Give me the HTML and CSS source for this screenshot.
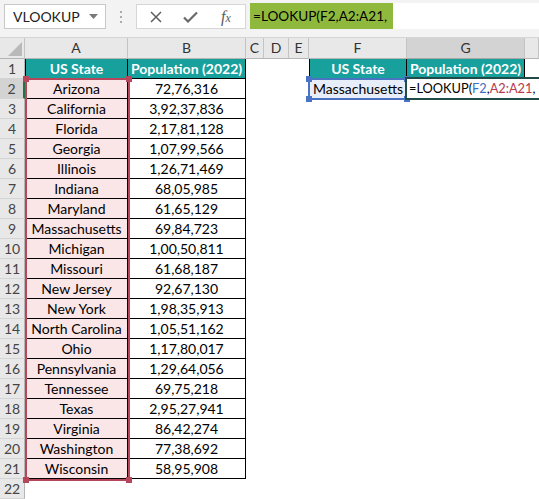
FILE: index.html
```html
<!DOCTYPE html>
<html>
<head>
<meta charset="utf-8">
<link rel="stylesheet" href="styles.css">
</head>
<body>
<div class="toolbar">
  <div class="namebox"><span>VLOOKUP</span><svg class="dd" width="9" height="5" viewBox="0 0 9 5"><path d="M0 0H9L4.5 5Z" fill="#7a7a7a"/></svg></div>
  <div class="dots"><svg width="4" height="14" viewBox="0 0 4 14"><circle cx="2" cy="2" r="1.1" fill="#9a9a9a"/><circle cx="2" cy="7" r="1.1" fill="#9a9a9a"/><circle cx="2" cy="12" r="1.1" fill="#9a9a9a"/></svg></div>
  <div class="fbtns">
    <svg class="ix" width="12" height="12" viewBox="0 0 12 12"><path d="M1 1L11 11M11 1L1 11" stroke="#5e5e5e" stroke-width="1.5"/></svg>
    <svg class="ic" width="15" height="12" viewBox="0 0 15 12"><path d="M1 6.5L5 10.5L14 1.5" stroke="#6a6a6a" stroke-width="2.2" fill="none"/></svg>
    <span class="fx">f<span class="fxx">x</span></span>
  </div>
  <div class="fbar"><span class="ftext">=LOOKUP(F2,A2:A21,</span></div>
</div>
<div class="sheet">
  <div class="row colhdr"><div class="corner"><svg width="14" height="14" viewBox="0 0 14 14"><path d="M14 0V14H0Z" fill="#b9b9b9"/></svg></div><div>A</div><div>B</div><div>C</div><div>D</div><div>E</div><div>F</div><div class="selc">G</div><div></div></div>
  <div class="row"><div class="rh">1</div><div class="c h la">US State</div><div class="c h">Population (2022)</div><div></div><div></div><div></div><div class="c h la">US State</div><div class="c h">Population (2022)</div></div>
  <div class="row"><div class="rh act">2</div><div class="c p la">Arizona</div><div class="c">72,76,316</div><div></div><div></div><div></div><div class="c fcell la">Massachusetts</div><div class="edit">=LOOKUP(<span class="rb">F2</span>,<span class="rr">A2:A21</span>,</div></div>
  <div class="row"><div class="rh">3</div><div class="c p la">California</div><div class="c">3,92,37,836</div></div>
  <div class="row"><div class="rh">4</div><div class="c p la">Florida</div><div class="c">2,17,81,128</div></div>
  <div class="row"><div class="rh">5</div><div class="c p la">Georgia</div><div class="c">1,07,99,566</div></div>
  <div class="row"><div class="rh">6</div><div class="c p la">Illinois</div><div class="c">1,26,71,469</div></div>
  <div class="row"><div class="rh">7</div><div class="c p la">Indiana</div><div class="c">68,05,985</div></div>
  <div class="row"><div class="rh">8</div><div class="c p la">Maryland</div><div class="c">61,65,129</div></div>
  <div class="row"><div class="rh">9</div><div class="c p la">Massachusetts</div><div class="c">69,84,723</div></div>
  <div class="row"><div class="rh">10</div><div class="c p la">Michigan</div><div class="c">1,00,50,811</div></div>
  <div class="row"><div class="rh">11</div><div class="c p la">Missouri</div><div class="c">61,68,187</div></div>
  <div class="row"><div class="rh">12</div><div class="c p la">New Jersey</div><div class="c">92,67,130</div></div>
  <div class="row"><div class="rh">13</div><div class="c p la">New York</div><div class="c">1,98,35,913</div></div>
  <div class="row"><div class="rh">14</div><div class="c p la">North Carolina</div><div class="c">1,05,51,162</div></div>
  <div class="row"><div class="rh">15</div><div class="c p la">Ohio</div><div class="c">1,17,80,017</div></div>
  <div class="row"><div class="rh">16</div><div class="c p la">Pennsylvania</div><div class="c">1,29,64,056</div></div>
  <div class="row"><div class="rh">17</div><div class="c p la">Tennessee</div><div class="c">69,75,218</div></div>
  <div class="row"><div class="rh">18</div><div class="c p la">Texas</div><div class="c">2,95,27,941</div></div>
  <div class="row"><div class="rh">19</div><div class="c p la">Virginia</div><div class="c">86,42,274</div></div>
  <div class="row"><div class="rh">20</div><div class="c p la">Washington</div><div class="c">77,38,692</div></div>
  <div class="row"><div class="rh">21</div><div class="c p la">Wisconsin</div><div class="c">58,95,908</div></div>
  <div class="row"><div class="rh">22</div></div>

  <div class="sel-red"><i class="hd tl"></i><i class="hd tr"></i><i class="hd bl"></i><i class="hd br"></i></div>
  <div class="sel-blue"><i class="hd tl"></i><i class="hd tr"></i><i class="hd bl"></i><i class="hd br"></i></div>
</div>
</body>
</html>
```
FILE: styles.css
```css
* { box-sizing: border-box; }
html, body { margin: 0; padding: 0; }
body {
  width: 539px;
  height: 499px;
  overflow: hidden;
  background: #fff;
  font-family: Lato, "Open Sans", sans-serif;
  color: #000;
}
.toolbar {
  height: 38px;
  background: #f3f3f3;
  display: flex;
  align-items: flex-start;
  padding: 4px 0 0 4px;
  border-bottom: 1px solid #d6d6d6;
}
.namebox {
  width: 102px;
  height: 25px;
  background: #fff;
  border: 1px solid #c8c8c8;
  display: flex;
  align-items: center;
  justify-content: space-between;
  padding: 0 7px 0 8px;
  font-size: 14px;
  color: #222;
}
.dots {
  width: 30px;
  height: 25px;
  display: flex;
  align-items: center;
  justify-content: center;
}
.fbtns {
  width: 110px;
  height: 25px;
  background: #fff;
  border: 1px solid #d6d6d6;
  display: flex;
  align-items: center;
  padding-left: 13px;
}
.ic { margin-left: 21px; }
.fx {
  margin-left: 23px;
  font-family: "Liberation Serif", serif;
  font-style: italic;
  font-size: 16px;
  color: #5a5a5a;
}
.fxx { font-size: 12px; }
.fbar {
  margin-left: 4px;
  flex: 1;
  height: 26px;
  margin-top: -1px;
  background: #fff;
  display: flex;
}
.ftext {
  background: #8fb93d;
  width: 143px;
  display: flex;
  align-items: center;
  padding-left: 3px;
  font-size: 13.6px;
  white-space: nowrap;
  overflow: hidden;
}
.sheet {
  position: relative;
}
.row {
  display: grid;
  grid-template-columns: 25px 103px 118px 18px 25px 20px 98px 118px 14px;
  height: 20px;
}
.colhdr {
  height: 21px;
  background: #e8e8e8;
}
.colhdr > div {
  border-right: 1px solid #c4c4c4;
  border-bottom: 1px solid #b5b5b5;
  text-align: center;
  line-height: 20px;
  font-size: 14px;
  color: #333;
}
.colhdr > .selc {
  background: #d3d3d3;
  border-bottom: 1px solid #a8a8a8;
}
.colhdr > .corner {
  display: flex;
  align-items: flex-end;
  justify-content: flex-end;
  padding: 0 2px 2px 0;
}
.rh {
  background: #e8e8e8;
  border-right: 1px solid #b5b5b5;
  border-bottom: 1px solid #d4d4d4;
  text-align: center;
  font-size: 14px;
  line-height: 19px;
  color: #444;
}
.rh.act {
  background: #d3d3d3;
  border-right: 2px solid #217346;
}
.c {
  border-right: 1px solid #000;
  border-bottom: 1px solid #000;
  text-align: center;
  font-size: 14px;
  line-height: 19px;
  white-space: nowrap;
}
.la { border-left: 1px solid #000; }
.h {
  background: #17a09c;
  color: #fff;
  font-weight: bold;
}
.p { background: #fae6e7; }
.fcell { background: #e8eef9; }
.edit {
  grid-column: span 2;
  margin: -2px 0 -1px -2px;
  border: 2px solid #1f4c49;
  border-right: none;
  background: #fff;
  position: relative;
  z-index: 3;
  font-size: 12.8px;
  line-height: 18px;
  padding-left: 2px;
  white-space: nowrap;
  overflow: hidden;
}
.rb { color: #3f6fc4; }
.rr { color: #b8384e; }
.sel-red {
  position: absolute;
  left: 25px;
  top: 40px;
  width: 105px;
  height: 403px;
  border: 2px solid #b6475a;
  z-index: 2;
}
.sel-blue {
  position: absolute;
  left: 308px;
  top: 40px;
  width: 100px;
  height: 22px;
  border: 2px solid #4a73c3;
  z-index: 2;
}
.hd {
  position: absolute;
  width: 6px;
  height: 6px;
}
.sel-red .hd { background: #b6475a; }
.sel-blue .hd { background: #4a73c3; }
.tl { left: -4px; top: -4px; }
.tr { right: -4px; top: -4px; }
.bl { left: -4px; bottom: -4px; }
.br { right: -4px; bottom: -4px; }
```
